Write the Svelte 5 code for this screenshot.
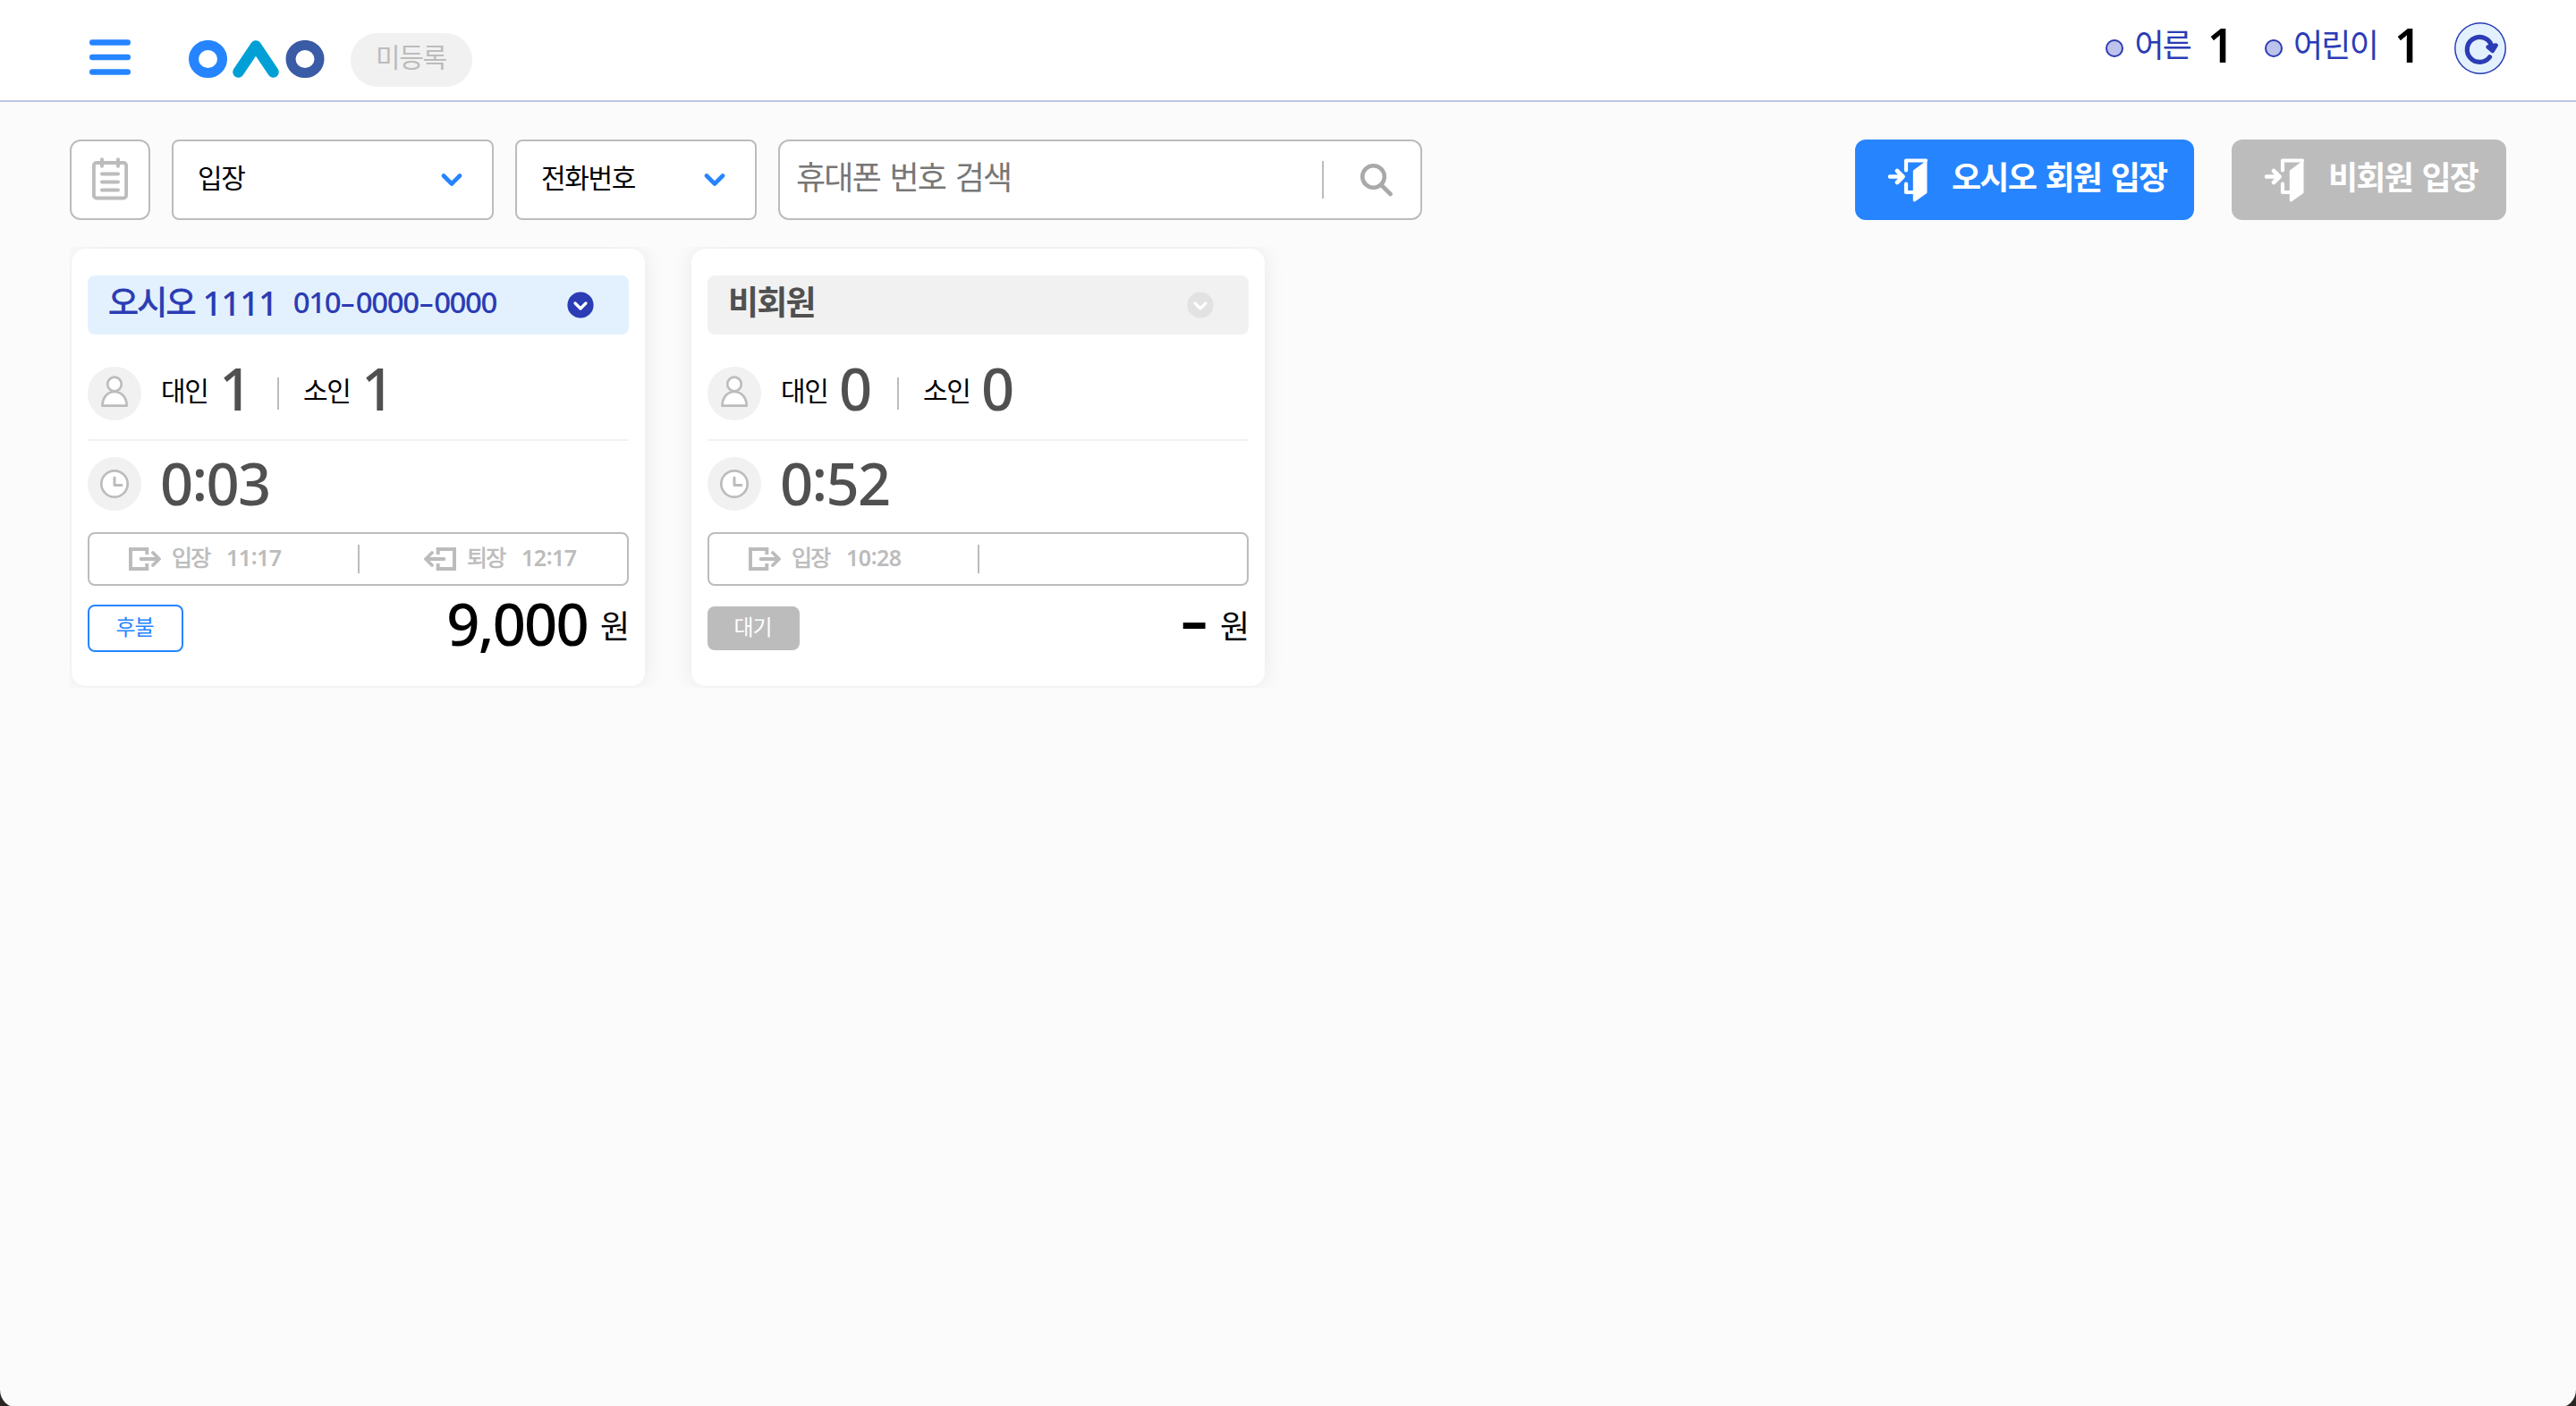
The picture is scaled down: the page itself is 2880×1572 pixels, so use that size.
<script>
  const filters = [
    { label: "입장", size: "wide" },
    { label: "전화번호", size: "narrow" },
  ];

  const counts = [
    { label: "어른", value: 1 },
    { label: "어린이", value: 1 },
  ];

  const cards = [
    {
      member: true,
      name: "오시오",
      code: "1111",
      phone: "010-0000-0000",
      adults: 1,
      children: 1,
      elapsed: "0:03",
      enter: "11:17",
      leave: "12:17",
      status: "후불",
      price: "9,000",
    },
    {
      member: false,
      name: "비회원",
      code: "",
      phone: "",
      adults: 0,
      children: 0,
      elapsed: "0:52",
      enter: "10:28",
      leave: "",
      status: "대기",
      price: "-",
    },
  ];
</script>

{#snippet figures(text)}{#each text as ch}{#if ch === "-"}<span class="dash">-</span>{:else if ch === ":"}<span class="colon">:</span>{:else}{ch}{/if}{/each}{/snippet}

{#snippet door()}
  <svg class="door" viewBox="0 0 44 50" width="44" height="50">
    <path d="M2 20.500h13M10 14l6.500 6.500-6.500 6.500" fill="none" stroke="currentColor" stroke-width="4.600" stroke-linecap="round" stroke-linejoin="round" />
    <path d="M20 13.500v-11h22M20 28.500v9.500h8" fill="none" stroke="currentColor" stroke-width="4.200" stroke-linecap="round" stroke-linejoin="round" />
    <path d="M42 5v33l-12.700 9v-32.500z" fill="currentColor" stroke="currentColor" stroke-width="3" stroke-linejoin="round" />
  </svg>
{/snippet}

<div class="window">
  <header>
    <svg class="menu" viewBox="0 0 46 40" width="46" height="40">
      <path d="M3.200 3.500h39.600M3.200 20h39.600M3.200 36.500h39.600" stroke="#2684ff" stroke-width="6.400" stroke-linecap="round" />
    </svg>
    <svg class="logo" viewBox="0 0 152 42" width="152" height="42">
      <ellipse cx="21.500" cy="21" rx="16" ry="15.600" fill="none" stroke="#2684ff" stroke-width="11" />
      <path d="M55.500 35.500l19.500-29 19.500 29" fill="none" stroke="#00a0d6" stroke-width="12.500" stroke-linecap="round" stroke-linejoin="round" />
      <ellipse cx="130" cy="21" rx="16" ry="15.600" fill="none" stroke="#3a5ba5" stroke-width="11" />
    </svg>
    <span class="badge">미등록</span>

    <div class="counts">
      {#each counts as count}
        <div class="count">
          <i class="dot"></i>
          <span class="count-label">{count.label}</span>
          <b class="count-value">{count.value}</b>
        </div>
      {/each}
      <button class="refresh" aria-label="refresh">
        <svg viewBox="0 0 58 58" width="58" height="58">
          <path d="M39.500 38.800a14 14 0 1 1 1.600-14" fill="none" stroke="#2b3cb4" stroke-width="5.200" stroke-linecap="round" />
          <path d="M37.500 27.500l5.200 4.500 4-6.500z" fill="#2b3cb4" stroke="#2b3cb4" stroke-width="4.400" stroke-linejoin="round" />
        </svg>
      </button>
    </div>
  </header>

  <div class="toolbar">
    <button class="list" aria-label="list">
      <svg viewBox="0 0 40 48" width="40" height="48">
        <rect x="1.900" y="6" width="36.200" height="39.500" rx="3" fill="none" stroke="#bcbcbc" stroke-width="3.800" />
        <path d="M11 2.200v7.600M29 2.200v7.600M11 18.500h18M11 27.500h18M11 36.500h18" stroke="#bcbcbc" stroke-width="4" stroke-linecap="round" />
      </svg>
    </button>
    {#each filters as filter}
      <div class="select {filter.size}">
        <span>{filter.label}</span>
        <svg viewBox="0 0 24 16" width="24" height="16">
          <path d="M3 3.500l9 9 9-9" fill="none" stroke="#2684ff" stroke-width="4.600" stroke-linecap="round" stroke-linejoin="round" />
        </svg>
      </div>
    {/each}
    <div class="search">
      <span>휴대폰 번호 검색</span>
      <svg viewBox="0 0 38 38" width="38" height="38">
        <circle cx="15.500" cy="15.500" r="12.300" fill="none" stroke="#a9a9a9" stroke-width="4.600" />
        <path d="M25 25.500l9.500 9.500" stroke="#a9a9a9" stroke-width="4.600" stroke-linecap="round" />
      </svg>
    </div>
    <button class="entry primary">{@render door()}<span>오시오 회원 입장</span></button>
    <button class="entry">{@render door()}<span>비회원 입장</span></button>
  </div>

  <main>
    {#each cards as card}
      <section class="card" class:member={card.member}>
        <div class="title">
          <span class="name">{card.name}</span>
          <span class="code">{card.code}</span>
          <span class="phone">{@render figures(card.phone)}</span>
          <svg viewBox="0 0 32 32" width="32" height="32">
            <circle class="disc" cx="16" cy="16" r="14.600" />
            <path d="M10 14l6 6 6-6" fill="none" stroke="#fff" stroke-width="3.200" stroke-linecap="round" stroke-linejoin="round" />
          </svg>
        </div>

        <div class="people">
          <svg class="round" viewBox="0 0 60 60" width="60" height="60">
            <circle cx="30" cy="30" r="30" fill="#f1f1f1" />
            <g fill="#fff" stroke="#bcbcbc" stroke-width="2.700" stroke-linejoin="round">
              <circle cx="30" cy="19.500" r="7.800" />
              <path d="M16.500 43.700c0-9 5.500-15.700 13.500-15.700s13.700 6.700 13.700 15.700z" />
            </g>
          </svg>
          <span class="label">대인</span>
          <b class="big">{card.adults}</b>
          <i class="bar"></i>
          <span class="label">소인</span>
          <b class="big">{card.children}</b>
        </div>

        <div class="elapsed">
          <svg class="round" viewBox="0 0 60 60" width="60" height="60">
            <circle cx="30" cy="30" r="30" fill="#f1f1f1" />
            <circle cx="30" cy="30" r="14.700" fill="#fff" stroke="#bcbcbc" stroke-width="2.700" />
            <path d="M30 23v8.500h8" fill="none" stroke="#bcbcbc" stroke-width="3" stroke-linecap="round" stroke-linejoin="round" />
          </svg>
          <b class="big">{@render figures(card.elapsed)}</b>
        </div>

        <div class="times">
          <div class="time">
            <svg viewBox="0 0 36 26" width="36" height="26">
              <path d="M20.300 8v-6h-18.300v22h18.300v-6" fill="none" stroke="#bcbcbc" stroke-width="4" />
              <path d="M13.500 13h20M27 6l7 7-7 7" fill="none" stroke="#bcbcbc" stroke-width="3.800" stroke-linecap="round" stroke-linejoin="round" />
            </svg>
            <span class="kind">입장</span>
            <span class="clock">{@render figures(card.enter)}</span>
          </div>
          <i class="bar"></i>
          {#if card.leave}
            <div class="time leave">
              <svg viewBox="0 0 36 26" width="36" height="26">
                <path d="M15.700 8v-6h18.300v22h-18.300v-6" fill="none" stroke="#bcbcbc" stroke-width="4" />
                <path d="M22.500 13h-20M9 6l-7 7 7 7" fill="none" stroke="#bcbcbc" stroke-width="3.800" stroke-linecap="round" stroke-linejoin="round" />
              </svg>
              <span class="kind">퇴장</span>
              <span class="clock">{@render figures(card.leave)}</span>
            </div>
          {/if}
        </div>

        <div class="bill">
          <span class="status">{card.status}</span>
          <b class="price">{@render figures(card.price)}</b>
          <span class="won">원</span>
        </div>
      </section>
    {/each}
  </main>
</div>

<style>
  :global(body) {
    background: #2b2623;
    overflow: hidden;
  }

  .window {
    width: 2880px;
    height: 1574px;
    border-radius: 0 0 20px 20px;
    background: #fbfbfb;
    font-family: "Noto Sans", "Noto Sans CJK KR", sans-serif;
    overflow: hidden;
  }

  button {
    padding: 0;
    font: inherit;
  }

  svg {
    display: block;
    flex: none;
  }

  span,
  b {
    white-space: nowrap;
  }

  header {
    display: flex;
    height: 112px;
    padding: 0 78px 0 100px;
    background: #fff;
    border-bottom: 2px solid #bfc5e5;
  }

  .menu {
    margin-top: 44px;
  }

  .logo {
    margin: 45px 0 0 65px;
  }

  .badge {
    box-sizing: border-box;
    width: 136px;
    height: 60px;
    margin: 37px 0 0 29px;
    padding-left: 28px;
    border-radius: 30px;
    background: #f1f1f1;
    color: #bcbcbc;
    font-size: 30px;
    line-height: 54px;
    letter-spacing: -0.045em;
  }

  .counts {
    display: flex;
    margin-left: auto;
  }

  .count {
    display: flex;
    height: 104px;
    line-height: 102px;
  }

  .dot {
    box-sizing: border-box;
    width: 20px;
    height: 20px;
    margin: 44px 12px 0 0;
    border: 2px solid #2b3cb4;
    border-radius: 50%;
    background: #bdc3ea;
  }

  .count-label {
    color: #2b3cb4;
    font-size: 36px;
    letter-spacing: -0.05em;
  }

  .count-value {
    width: 64px;
    margin-left: 19px;
    font-size: 52px;
    font-weight: 600;
    line-height: 99px;
  }

  .refresh {
    width: 58px;
    height: 58px;
    margin: 25px 0 0 3px;
    border: 0;
    border-radius: 50%;
    background: #e3f1fe;
    box-shadow: inset 0 0 0 1.5px #2b3cb4;
  }

  .toolbar {
    display: flex;
    height: 90px;
    padding: 42px 78px 0;
  }

  .list,
  .select,
  .search {
    box-sizing: border-box;
    display: flex;
    border: 2px solid #bcbcbc;
    background: #fff;
  }

  .list {
    width: 90px;
    padding: 18px 0 0 23px;
    border-radius: 12px;
  }

  .select {
    justify-content: space-between;
    margin-left: 24px;
    border-radius: 8px;
    font-size: 30px;
    line-height: 81px;
    letter-spacing: -0.045em;
  }

  .select svg {
    margin-top: 35px;
  }

  .wide {
    width: 360px;
    padding: 0 33px 0 27px;
  }

  .narrow {
    width: 270px;
    padding: 0 33px 0 27px;
  }

  .search {
    width: 720px;
    margin-left: 24px;
    padding-left: 18px;
    border-radius: 12px;
    color: #777;
    font-size: 36px;
    line-height: 82px;
    letter-spacing: -0.05em;
    word-spacing: 3px;
  }

  .search span {
    width: 588px;
  }

  .search svg {
    height: 38px;
    margin-top: 22px;
    padding: 2px 0 2px 40px;
    border-left: 2px solid #bcbcbc;
  }

  .entry {
    display: flex;
    width: 307px;
    height: 90px;
    margin-left: 42px;
    padding-left: 37px;
    border: 0;
    border-radius: 12px;
    background: #bcbcbc;
    color: #fff;
    font-size: 36px;
    font-weight: 700;
    line-height: 85px;
    letter-spacing: -0.05em;
    word-spacing: 3px;
  }

  .primary {
    width: 379px;
    margin-left: auto;
    background: #2684ff;
  }

  .door {
    margin: 21px 27px 0 0;
  }

  /* clips the card shadows to a hairline above and below */
  main {
    display: flex;
    gap: 52px;
    margin: 30px 0 0 78px;
    padding: 2px;
    overflow: hidden;
  }

  .card {
    box-sizing: border-box;
    width: 641px;
    height: 489px;
    padding: 30px 18px 0;
    border-radius: 16px;
    background: #fff;
    box-shadow: 0 0 24px rgba(0, 0, 0, 0.08);
  }

  .title {
    display: flex;
    height: 66px;
    padding: 0 38px 0 23px;
    border-radius: 8px;
    background: #f1f1f1;
    color: #505050;
    line-height: 60px;
  }

  .member .title {
    background: #e3f1fe;
    color: #2b3cb4;
  }

  .name {
    font-size: 37px;
    font-weight: 700;
    letter-spacing: -0.05em;
  }

  .member .name {
    font-weight: 400;
    -webkit-text-stroke: 0.9px currentColor;
  }

  .code {
    margin-left: 9px;
    font-size: 38px;
    font-weight: 500;
    letter-spacing: -0.025em;
  }

  .phone {
    margin-left: 18px;
    font-size: 33px;
    font-weight: 500;
    letter-spacing: -1.4px;
  }

  .phone .dash {
    width: 17.5px;
  }

  .title svg {
    margin: 17px 0 0 auto;
  }

  .disc {
    fill: #e2e2e2;
  }

  .member .disc {
    fill: #2b3cb4;
  }

  .people {
    display: flex;
    height: 117px;
    border-bottom: 2px solid #f1f1f1;
    line-height: 126px;
  }

  .people .round {
    margin-top: 36px;
  }

  .label {
    width: 65px;
    margin-left: 22px;
    font-size: 30px;
    letter-spacing: -0.045em;
  }

  .big {
    color: #505050;
    font-size: 65px;
    font-weight: 500;
    letter-spacing: -1.7px;
  }

  .people .big {
    width: 65px;
    line-height: 120px;
  }

  .people .bar {
    margin-right: 5px;
    width: 2px;
    height: 36px;
    margin-top: 48px;
    background: #bcbcbc;
  }

  .elapsed {
    display: flex;
    height: 102px;
  }

  .elapsed .round {
    margin: 18px 21px 0 0;
  }

  .elapsed .big {
    line-height: 94px;
  }

  .dash {
    display: inline-block;
    text-align: center;
    letter-spacing: 0;
    transform: scaleX(1.6);
  }

  .colon {
    position: relative;
    top: -0.08em;
  }

  .times {
    box-sizing: border-box;
    display: flex;
    height: 60px;
    border: 2px solid #bcbcbc;
    border-radius: 8px;
    color: #bcbcbc;
    line-height: 52px;
  }

  .times .bar {
    width: 2px;
    height: 32px;
    margin-top: 12px;
    background: #bcbcbc;
  }

  .time {
    display: flex;
    width: 256px;
    padding-left: 44px;
  }

  .leave {
    padding-left: 72px;
    width: auto;
  }

  .time svg {
    margin-top: 15px;
  }

  .kind {
    width: 61px;
    margin-left: 12px;
    font-size: 25px;
    letter-spacing: -0.07em;
    -webkit-text-stroke: 0.7px currentColor;
  }

  .clock {
    font-size: 25px;
    font-weight: 600;
    letter-spacing: -0.5px;
  }

  .bill {
    display: flex;
    height: 90px;
  }

  .status {
    box-sizing: border-box;
    width: 103px;
    height: 49px;
    margin: 23px auto 0 0;
    padding-right: 2px;
    border-radius: 8px;
    background: #bcbcbc;
    color: #fff;
    font-size: 24px;
    line-height: 45px;
    letter-spacing: -0.05em;
    text-align: center;
  }

  .member .status {
    width: 107px;
    height: 53px;
    margin-top: 21px;
    border: 2px solid #2684ff;
    background: #fff;
    color: #2684ff;
  }

  .price {
    font-size: 65px;
    font-weight: 500;
    line-height: 84px;
    letter-spacing: -1.8px;
  }

  .price .dash {
    position: relative;
    top: -5px;
    width: 28px;
    margin-right: 1px;
    font-weight: 600;
    transform: scaleX(1.5);
  }

  .won {
    margin: 0 -1px 0 14px;
    font-size: 36px;
    line-height: 91px;
  }
</style>
